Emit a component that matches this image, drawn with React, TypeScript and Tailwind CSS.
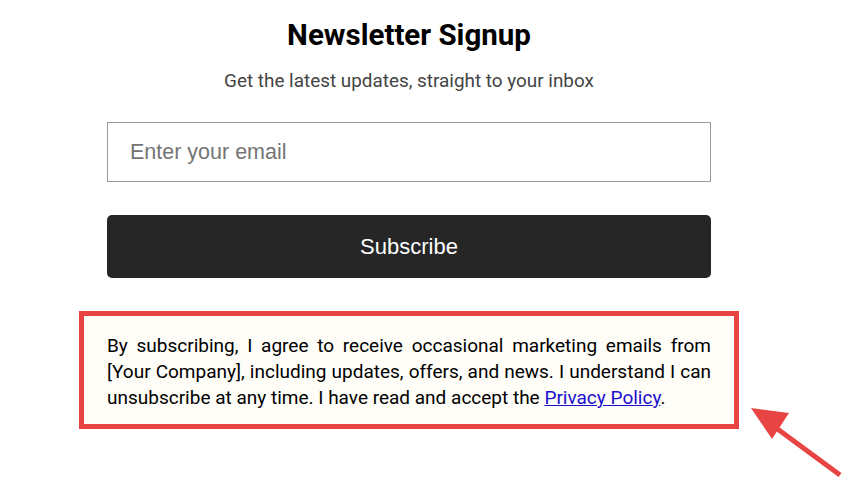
import React from 'react';

export default function App() {
    return (
        <div className="relative min-h-[479px] w-[845px] overflow-hidden bg-white font-['Roboto',sans-serif]">
            <div className="flex w-[818px] flex-col items-center pt-[16px]">
                <h1 className="text-[29.5px] font-bold leading-[38px] text-black">Newsletter Signup</h1>
                <p className="mt-[16px] text-[18.9px] leading-[22px] text-[#444]">Get the latest updates, straight to your inbox</p>

                <form className="mt-[30px] flex w-[604px] flex-col" onSubmit={(e) => e.preventDefault()}>
                    <input
                        type="email"
                        placeholder="Enter your email"
                        className="h-[60px] w-full border border-[#9a9a9a] px-[22px] font-['Liberation_Sans',sans-serif] text-[21.5px] text-black outline-none placeholder:text-[#757575]"
                    />
                    <button
                        type="submit"
                        className="mt-[33px] h-[63px] w-full rounded-[5px] bg-[#262626] font-['Liberation_Sans',sans-serif] text-[22px] text-white"
                    >
                        Subscribe
                    </button>
                </form>

                <div className="mt-[33px] w-[660px] border-[5px] border-[#e94444] bg-[#fffdf7] px-[23px] pt-[17px] pb-[13px]">
                    <p className="text-justify text-[19px] leading-[26px] text-black">
                        By subscribing, I agree to receive occasional marketing emails from [Your Company], including updates, offers, and news. I understand I can unsubscribe at any time. I have read and accept the{' '}
                        <a href="#" className="text-[#1a0dcc] underline">Privacy Policy</a>.
                    </p>
                </div>
            </div>

            <svg className="absolute left-[740px] top-[395px]" width="105" height="84" viewBox="0 0 105 84" aria-hidden="true">
                <line x1="100" y1="80" x2="28" y2="27" stroke="#e94444" strokeWidth="5" strokeLinecap="butt" />
                <polygon points="11,13 49,18 32,44" fill="#e94444" />
            </svg>
        </div>
    );
}
